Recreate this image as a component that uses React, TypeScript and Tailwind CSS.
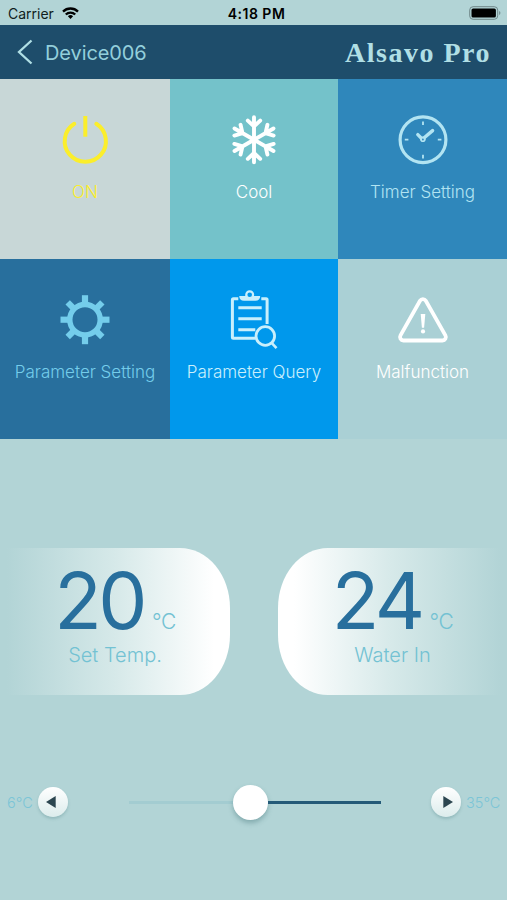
import type { ReactNode } from "react";
import { clsx } from "clsx";

function PowerIcon() {
  return (
    <svg viewBox="0 0 60 60" className="h-[60px] w-[60px]" fill="none" stroke="currentColor" strokeWidth={4} strokeLinecap="round">
      <path d="M19.3 13.8a20.6 20.6 0 1 0 22 0" />
      <path d="M30.3 6v20.7" strokeLinecap="butt" />
    </svg>
  );
}

function SnowflakeIcon() {
  return (
    <svg viewBox="0 0 60 60" className="h-[60px] w-[60px]" fill="none" stroke="currentColor" strokeWidth={3.9} strokeLinecap="round">
      {[0, 60, 120, 180, 240, 300].map((angle) => (
        <path key={angle} d="M30 29.7V7.2M23.8 10.6l6.2 5.8l6.2-5.8" transform={`rotate(${angle} 30 29.7)`} />
      ))}
    </svg>
  );
}

function ClockIcon() {
  return (
    <svg viewBox="0 0 60 60" className="h-[60px] w-[60px]" fill="none" stroke="currentColor">
      <circle cx="30" cy="29.7" r="22.9" strokeWidth={3.2} />
      <path d="M30 11.5v3.6M30 44.8v3.6M11.8 29.7h3.6M44.8 29.7h3.6" strokeWidth={1.8} />
      <path d="M24.8 24.6l4.6 4.6l10.2-8.6" strokeWidth={3.4} strokeLinecap="round" strokeLinejoin="round" />
      <circle cx="29.9" cy="29.3" r="2.8" fill="currentColor" stroke="none" />
      <circle cx="29.9" cy="29.5" r="0.9" fill="#2f87bb" stroke="none" />
    </svg>
  );
}

function GearIcon() {
  return (
    <svg viewBox="0 0 60 60" className="h-[60px] w-[60px]" fill="none" stroke="currentColor">
      <circle cx="30" cy="29.7" r="15.2" strokeWidth={5.4} />
      {[0, 45, 90, 135, 180, 225, 270, 315].map((angle) => (
        <path key={angle} d="M30 14V5.2" strokeWidth={6.2} transform={`rotate(${angle} 30 29.7)`} />
      ))}
    </svg>
  );
}

function QueryIcon() {
  return (
    <svg viewBox="0 0 60 60" className="h-[60px] w-[60px]" fill="none" stroke="currentColor" strokeWidth={3}>
      <path d="M14.3 8.7H9.4a1 1 0 0 0-1 1v37.6a1 1 0 0 0 1 1H31.5M37.3 8.7h4.8a1 1 0 0 1 1 1V34" />
      <path d="M14.3 17.7h23.4M14.3 28.7h23.4M14.3 39.7h17" />
      <path d="M15.2 5.9h6.3a4.3 4.3 0 0 1 8.5 0h6.2c0 2.8-1.8 4.8-4.8 4.8H20c-3 0-4.8-2-4.8-4.8z" fill="currentColor" stroke="none" />
      <circle cx="25.7" cy="4.7" r="3.4" strokeWidth={2.2} fill="#0098ec" />
      <circle cx="41.3" cy="46" r="9.3" strokeWidth={2.8} />
      <path d="M47.9 53.2l4.6 5" strokeWidth={2.6} />
    </svg>
  );
}

function WarningIcon() {
  return (
    <svg viewBox="0 0 60 60" className="h-[60px] w-[60px]" fill="none" stroke="currentColor">
      <path d="M27 10.8a3.4 3.4 0 0 1 5.8 0L52.4 45.4a3.4 3.4 0 0 1-2.9 5.1H10.4a3.4 3.4 0 0 1-2.9-5.1z" strokeWidth={3.8} />
      <path d="M27.7 23.9h4.6l-1.2 13.8h-2.2z" fill="currentColor" stroke="none" />
      <circle cx="30" cy="41.4" r="2.1" fill="currentColor" stroke="none" />
    </svg>
  );
}

interface Tile {
  label: string;
  icon: ReactNode;
  color: string;
}

const tiles: Tile[] = [
  { label: "ON", icon: <PowerIcon />, color: "bg-[#c8d7d7] text-[#fbee2b]" },
  { label: "Cool", icon: <SnowflakeIcon />, color: "bg-[#74c2ca] text-white" },
  { label: "Timer Setting", icon: <ClockIcon />, color: "bg-[#2f87bb] text-[#b2e4f2]" },
  { label: "Parameter Setting", icon: <GearIcon />, color: "bg-[#286f9d] text-[#74cdeb]" },
  { label: "Parameter Query", icon: <QueryIcon />, color: "bg-[#0098ec] text-[#c9effc]" },
  { label: "Malfunction", icon: <WarningIcon />, color: "bg-[#aad0d5] text-white" },
];

function StatusBar() {
  return (
    <div className="grid h-[25px] grid-cols-3 items-center pt-px pr-1.5 pl-[8px] text-[#101d20]">
      <div className="flex items-center gap-2 text-[14px]">
        <span>Carrier</span>
        <svg viewBox="0 0 17 12" className="h-3 w-[17px]" fill="none" stroke="black" strokeWidth={2.3}>
          <path d="M1 4.6a10.6 10.6 0 0 1 15 0" />
          <path d="M3.8 7.5a6.6 6.6 0 0 1 9.4 0" />
          <path d="M8.5 12L5.9 9.3a3.7 3.7 0 0 1 5.2 0z" fill="black" stroke="none" />
        </svg>
      </div>
      <span className="pl-[4px] text-center text-[14px] font-semibold tracking-[0.5px] text-black">4:18 PM</span>
      <svg viewBox="0 0 32 14" className="h-3.5 w-8 justify-self-end" fill="none">
        <rect x="0.7" y="0.7" width="28" height="12.6" rx="3.4" stroke="#6f8789" strokeWidth={1} />
        <rect x="2.5" y="2.5" width="24.4" height="9" rx="1.6" fill="black" />
        <path d="M30.2 4.9c1.6.7 1.6 3.5 0 4.2z" fill="#6f8789" />
      </svg>
    </div>
  );
}

interface TempCardProps {
  value: number;
  label: string;
  side: "left" | "right";
}

function TempCard({ value, label, side }: TempCardProps) {
  return (
    <div
      className={clsx(
        "flex h-[147px] flex-col items-center from-[#b2d4d6] from-3% via-[#d6e9e9] via-50% to-white to-93%",
        side === "left"
          ? "w-[230px] rounded-r-[50px_60px] bg-linear-to-r"
          : "w-[229px] rounded-l-[50px_60px] bg-linear-to-l"
      )}
    >
      <div className="mt-[23px] flex h-[71px] items-baseline gap-[8px] leading-[60px]">
        <span className="text-[78px] tracking-[-3.5px] text-[#286f9d]">{value}</span>
        <span className="text-[21px] leading-6 font-[350] tracking-[-0.5px] text-[#73c2d3]">°C</span>
      </div>
      <p className="text-[20px] leading-[26px] font-[350] text-[#73c2d3]">{label}</p>
    </div>
  );
}

function StepButton({ direction }: { direction: "down" | "up" }) {
  return (
    <button
      type="button"
      aria-label={direction}
      className="flex h-[30px] w-[30px] items-center justify-center rounded-full bg-linear-to-b from-white to-[#dcecec] shadow-[0_2px_3px_rgba(60,110,115,0.25)]"
    >
      <svg
        viewBox="0 0 10 12"
        className={clsx("h-3 w-2.5 fill-[#2c4650]", direction === "down" ? "mr-[5px]" : "ml-[4px]")}
      >
        <path d={direction === "down" ? "M9.7 0v12L0 6z" : "M.3 0v12L10 6z"} />
      </svg>
    </button>
  );
}

export default function App() {
  return (
    <div className="h-[900px] w-[507px] overflow-hidden bg-[#b2d4d6] font-['Inter','Liberation_Sans',sans-serif]">
      <StatusBar />

      <header className="flex h-[54px] items-center bg-[#1e4d6b] pr-[16px] pl-[17px] text-[#b0dfe5]">
        <svg viewBox="0 0 16 26" className="h-[26px] w-4" fill="none" stroke="currentColor" strokeWidth={2.3}>
          <path d="M14.5 1.5L2 13l12.5 11.5" />
        </svg>
        <h1 className="ml-[12px] pt-[2px] text-[20px] tracking-[-0.1px] text-[#93cfdb]">Device006</h1>
        <span className="ml-auto pt-px font-['Liberation_Serif',serif] text-[28px] font-bold tracking-[1.5px]">Alsavo Pro</span>
      </header>

      <div className="grid grid-cols-[170px_168px_169px]">
        {tiles.map((tile) => (
          <button
            key={tile.label}
            type="button"
            className={clsx("flex h-[180px] flex-col items-center pt-[31px]", tile.color)}
          >
            {tile.icon}
            <span className="mt-[10px] text-[17px] leading-6 font-[350] whitespace-nowrap">{tile.label}</span>
          </button>
        ))}
      </div>

      <div className="mt-[109px] flex justify-between">
        <TempCard value={20} label="Set Temp." side="left" />
        <TempCard value={24} label="Water In" side="right" />
      </div>

      <div className="mt-[88px] flex h-[38px] items-center px-[7px] text-[15px] font-light text-[#7cc5d6]">
        <span className="w-[31px] pt-px text-[14.5px]">6°C</span>
        <StepButton direction="down" />
        <div className="ml-[61px] flex w-[252px] items-center">
          <span className="h-[3px] w-[104px] bg-[#a3ccd1]" />
          <span className="h-[35px] w-[35px] shrink-0 rounded-full bg-white shadow-[0_3px_5px_rgba(60,110,115,0.4)]" />
          <span className="h-[3px] flex-1 bg-[#245a78]" />
        </div>
        <div className="ml-auto flex items-center">
          <StepButton direction="up" />
          <span className="ml-[5px] w-[34px] pt-px text-[14.5px] whitespace-nowrap">35°C</span>
        </div>
      </div>
    </div>
  );
}
